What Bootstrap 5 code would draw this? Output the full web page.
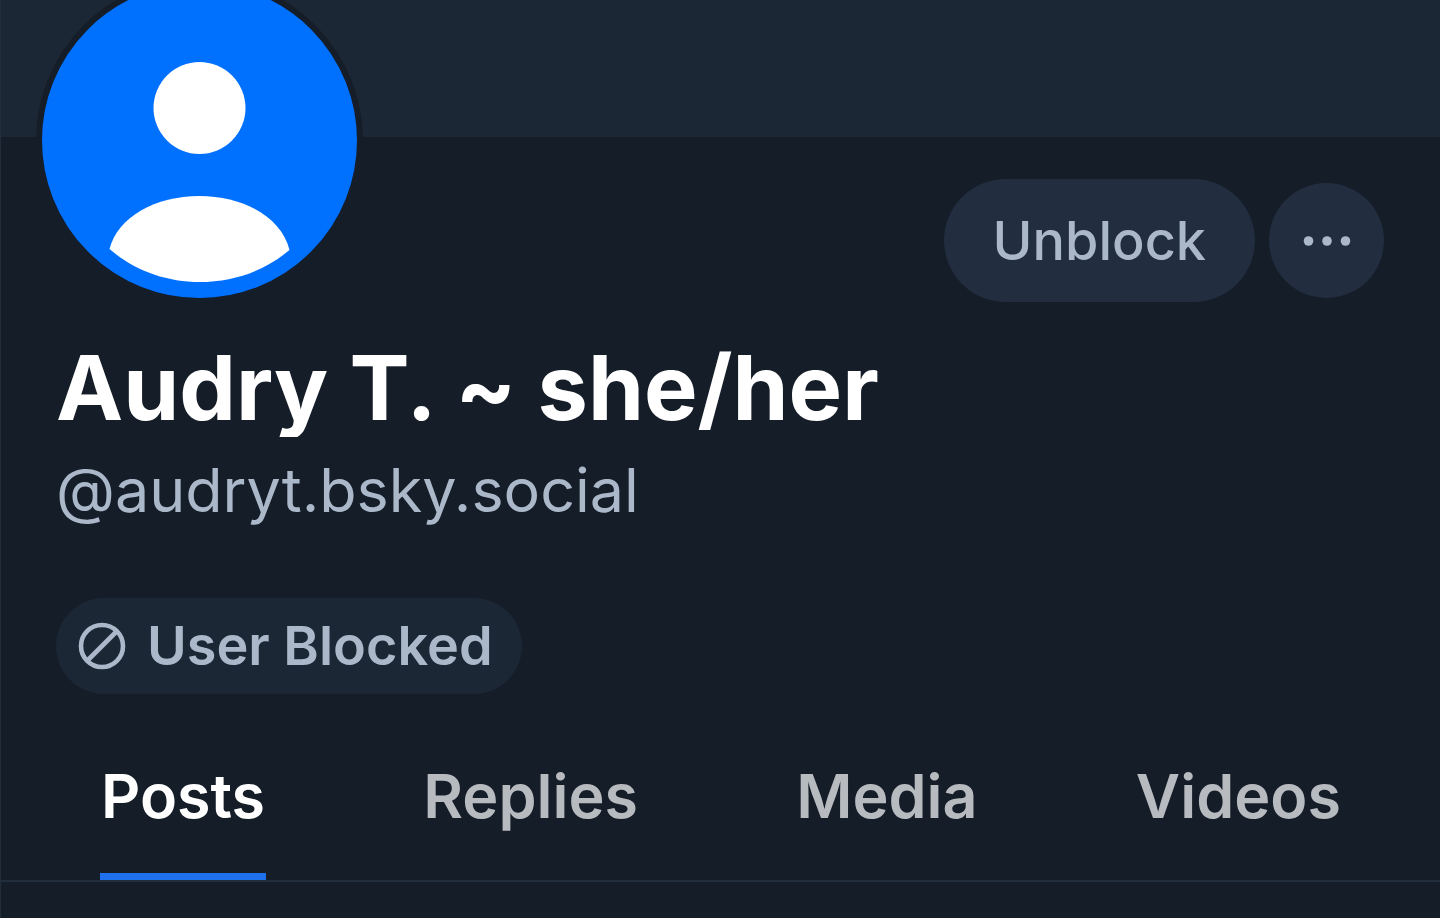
<!DOCTYPE html>
<html lang="en">
<head>
<meta charset="utf-8">
<meta name="viewport" content="width=device-width, initial-scale=1">
<title>Audry T. ~ she/her</title>
<link href="https://cdn.jsdelivr.net/npm/bootstrap@5.3.0/dist/css/bootstrap.min.css" rel="stylesheet">
<style>
body { background: #151d28; color: #fff; font-family: Inter, "Liberation Sans", sans-serif; min-height: 100vh; border-left: 1px solid #212d3b; }
.banner { height: 137px; background: #1c2736; }
.profile-head { padding: 0 56px 0 35px; }
.avatar { width: 327px; height: 327px; margin-top: -160px; border: 6px solid #151d28; background: #0070ff; position: relative; }
.profile-actions { gap: 14px; padding-top: 42px; }
.btn-dim { background: #222d3f; color: #abb8c9; border: 0; }
.btn-dim:hover { background: #2b384d; color: #d0d8e4; }
.btn-unblock { font-size: 54px; line-height: 67px; font-weight: 500; padding: 28px 49px; }
.btn-more { width: 115px; height: 115px; }
.profile-info { padding: 0 55px; }
.display-name { font-size: 90px; line-height: 98px; font-weight: 700; margin-top: 35px; overflow: hidden; }
.handle { font-size: 61px; line-height: 72px; color: #abb8c9; margin-top: 17px; }
.block-label { font-size: 54px; line-height: 66px; font-weight: 600; background: #1c2736; color: #abb8c9; padding: 15px 29px 15px 22px; gap: 21px; margin-top: 72px; }
.profile-tabs { padding: 0 98px 0 99px; margin-top: 54px; border-bottom: 2px solid #212d3b; }
.profile-tabs a { font-size: 61px; line-height: 72px; font-weight: 600; color: #b7babe; padding: 12px 1px 41px; border-bottom: 7px solid transparent; }
.profile-tabs a.active { color: #fff; border-color: #1f70ec; }
</style>
</head>
<body>
<header>
<div class="banner"></div>
<div class="profile-head d-flex justify-content-between align-items-start">
<div class="avatar rounded-circle overflow-hidden">
<svg class="d-block" width="315" height="315" viewBox="0 0 315 315" role="img" aria-label="Avatar"><circle cx="157.500" cy="125" r="46" fill="#fff"/><path d="M67.500 266C75.500 234 113.500 213 157.500 213S239.500 234 247.500 267C222.500 288 191.500 299 157.500 299S91.500 287 67.500 266Z" fill="#fff"/></svg>
</div>
<div class="profile-actions d-flex align-items-center">
<button type="button" class="btn btn-dim btn-unblock rounded-pill">Unblock</button>
<button type="button" class="btn btn-dim btn-more rounded-circle p-0 d-flex align-items-center justify-content-center" aria-label="More options"><svg width="48" height="12" viewBox="0 0 48 12" fill="currentColor"><circle cx="5.500" cy="6" r="4.800"/><circle cx="24" cy="6" r="4.800"/><circle cx="42.500" cy="6" r="4.800"/></svg></button>
</div>
</div>
</header>
<main>
<section class="profile-info">
<h1 class="display-name mb-0">Audry T. ~ she/her</h1>
<p class="handle mb-0">@audryt.bsky.social</p>
<div class="block-label d-inline-flex align-items-center rounded-pill">
<svg width="48" height="48" viewBox="0 0 48 48" fill="none" stroke="currentColor" stroke-width="4.600"><circle cx="24" cy="24" r="21"/><path d="M9.500 38.500 38.500 9.500"/></svg>
<span>User Blocked</span>
</div>
</section>
<nav class="profile-tabs d-flex justify-content-between" aria-label="Profile">
<a class="active text-decoration-none" href="#posts" aria-current="page">Posts</a>
<a class="text-decoration-none" href="#replies">Replies</a>
<a class="text-decoration-none" href="#media">Media</a>
<a class="text-decoration-none" href="#videos">Videos</a>
</nav>
</main>
<script src="https://cdn.jsdelivr.net/npm/bootstrap@5.3.0/dist/js/bootstrap.bundle.min.js"></script>
</body>
</html>
